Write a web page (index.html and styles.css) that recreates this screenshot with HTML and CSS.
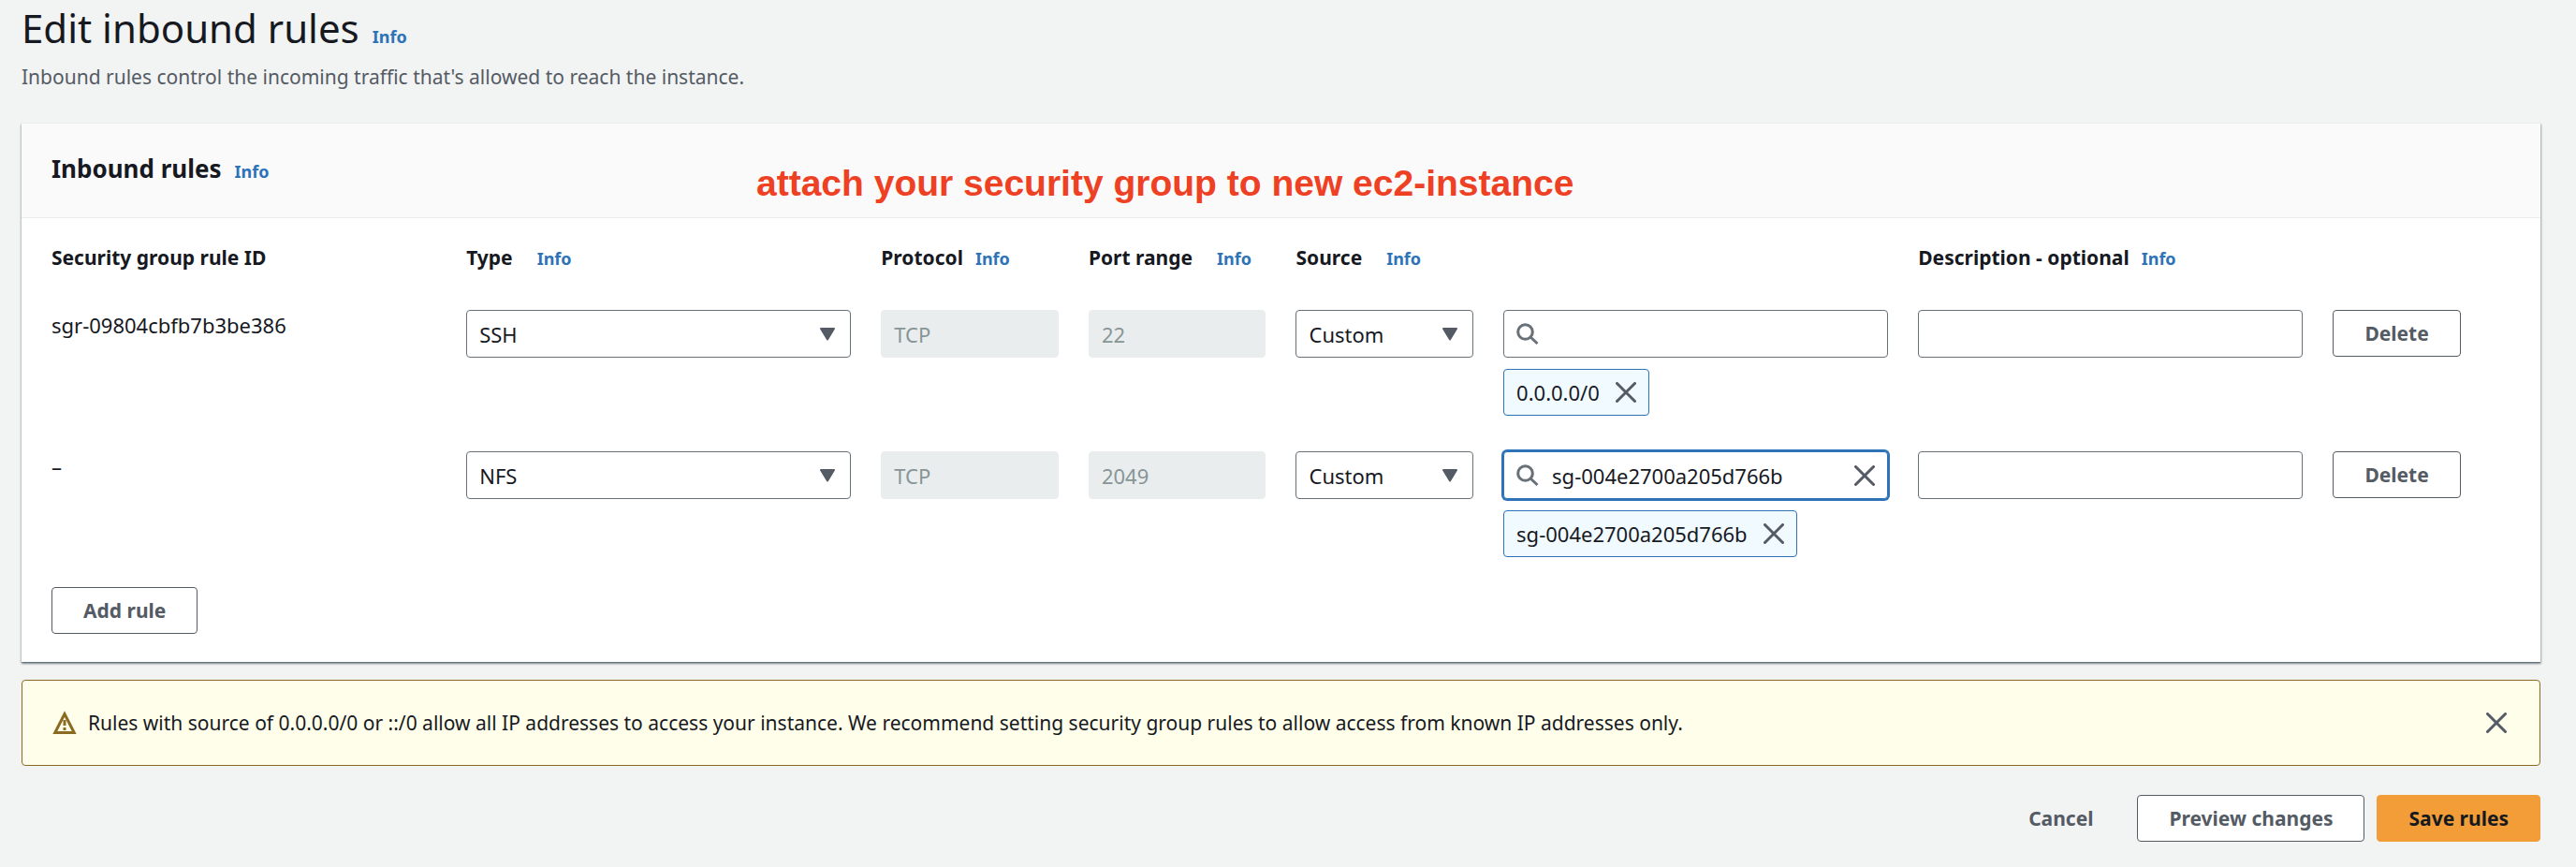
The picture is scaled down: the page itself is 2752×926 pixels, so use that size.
FILE: index.html
```html
<!DOCTYPE html>
<html lang="en">
<head>
<meta charset="utf-8">
<meta name="viewport" content="width=device-width, initial-scale=1">
<title>Edit inbound rules</title>
<link rel="stylesheet" href="styles.css">
</head>
<body>
<svg class="sprite" aria-hidden="true">
  <symbol id="icon-search" viewBox="0 0 24 24"><circle cx="9.5" cy="9.5" r="7.8"/><path d="M15 15l7.5 7"/></symbol>
  <symbol id="icon-close" viewBox="0 0 22 22"><path d="M1.5 1.5l19 19M20.500 1.500l-19 19"/></symbol>
  <symbol id="icon-caret" viewBox="0 0 16 14"><path d="M1 1h14l-7 11.500z"/></symbol>
  <symbol id="icon-warning" viewBox="0 0 26 26"><path d="M13 3.500L23.200 23.500H2.800z"/><path d="M13 10v6M13 18v3"/></symbol>
</svg>
<main class="page">
  <header class="page-header">
    <div class="title-line"><h1>Edit inbound rules</h1><a class="info" href="#info">Info</a></div>
    <p class="lead">Inbound rules control the incoming traffic that's allowed to reach the instance.</p>
  </header>

  <form class="form">
    <section class="card">
      <header class="card-header">
        <div class="title-line"><h2>Inbound rules</h2><a class="info" href="#info-rules">Info</a></div>
        <p class="note">attach your security group to new ec2-instance</p>
      </header>
      <div class="card-body">
        <div class="grid heads">
          <div class="wide head"><span id="h-id">Security group rule ID</span></div>
          <div class="wide head spaced"><span id="h-type">Type</span><a class="info" href="#info-type">Info</a></div>
          <div class="head"><span id="h-protocol">Protocol</span><a class="info" href="#info-protocol">Info</a></div>
          <div class="head spaced"><span id="h-port">Port range</span><a class="info" href="#info-port">Info</a></div>
          <div class="triple head spaced"><span id="h-source">Source</span><a class="info" href="#info-source">Info</a></div>
          <div class="triple head"><span id="h-desc">Description - optional</span><a class="info" href="#info-description">Info</a></div>
        </div>

        <div class="rules">
          <div class="grid">
            <div class="wide rule-id">sgr-09804cbfb7b3be386</div>
            <div class="wide select"><select class="control" aria-labelledby="h-type"><option>SSH</option></select><svg class="caret"><use href="#icon-caret"/></svg></div>
            <input class="control" type="text" value="TCP" disabled aria-labelledby="h-protocol">
            <input class="control" type="text" value="22" disabled aria-labelledby="h-port">
            <div class="select"><select class="control" aria-labelledby="h-source"><option>Custom</option></select><svg class="caret"><use href="#icon-caret"/></svg></div>
            <div class="wide source">
              <div class="control search"><svg class="glass"><use href="#icon-search"/></svg><input type="text" aria-label="Source filter"></div>
              <div class="token"><span>0.0.0.0/0</span><button class="close" type="button" aria-label="Remove 0.0.0.0/0"><svg><use href="#icon-close"/></svg></button></div>
            </div>
            <input class="wide control" type="text" aria-labelledby="h-desc">
            <div><button class="button" type="button">Delete</button></div>
          </div>
          <div class="grid">
            <div class="wide rule-id">–</div>
            <div class="wide select"><select class="control" aria-labelledby="h-type"><option>NFS</option></select><svg class="caret"><use href="#icon-caret"/></svg></div>
            <input class="control" type="text" value="TCP" disabled aria-labelledby="h-protocol">
            <input class="control" type="text" value="2049" disabled aria-labelledby="h-port">
            <div class="select"><select class="control" aria-labelledby="h-source"><option>Custom</option></select><svg class="caret"><use href="#icon-caret"/></svg></div>
            <div class="wide source">
              <div class="control search active"><svg class="glass"><use href="#icon-search"/></svg><input type="text" value="sg-004e2700a205d766b" aria-label="Source filter"><button class="close" type="button" aria-label="Clear"><svg><use href="#icon-close"/></svg></button></div>
              <div class="token"><span>sg-004e2700a205d766b</span><button class="close" type="button" aria-label="Remove sg-004e2700a205d766b"><svg><use href="#icon-close"/></svg></button></div>
            </div>
            <input class="wide control" type="text" aria-labelledby="h-desc">
            <div><button class="button" type="button">Delete</button></div>
          </div>
        </div>
        <button class="button" type="button">Add rule</button>
      </div>
    </section>

    <div class="alert" role="status">
      <svg class="warning" aria-hidden="true"><use href="#icon-warning"/></svg>
      <p>Rules with source of 0.0.0.0/0 or ::/0 allow all IP addresses to access your instance. We recommend setting security group rules to allow access from known IP addresses only.</p>
      <button class="close" type="button" aria-label="Dismiss"><svg><use href="#icon-close"/></svg></button>
    </div>

    <div class="actions">
      <button class="button link" type="button">Cancel</button>
      <button class="button" type="button">Preview changes</button>
      <button class="button primary" type="submit">Save rules</button>
    </div>
  </form>
</main>
</body>
</html>
```
FILE: styles.css
```css
*{box-sizing:border-box}
body{
  margin:0;
  background:#f2f3f3;
  color:#16191f;
  font-family:"Noto Sans",sans-serif;
  font-size:21px;
  line-height:32px;
}
h1,h2,p{margin:0}
svg{display:block;fill:none;stroke:currentColor}
.sprite{position:absolute;width:0;height:0}

.page{padding:0 38px 28px 23px}
.title-line{display:flex;align-items:baseline;gap:14px}
h1{font-size:42px;font-weight:400;line-height:60px}
h2{font-size:26px;font-weight:700;line-height:36px}
.info{color:#2e73b8;font-size:18px;font-weight:700;text-decoration:none}
.lead{margin-top:6px;color:#545b64}
.form{margin-top:33px}

.card{
  background:#fff;
  border-top:1px solid #eaeded;
  box-shadow:0 1px 1px 0 rgba(0,28,36,.3),1px 2px 2px 0 rgba(0,28,36,.3),-1px 2px 2px 0 rgba(0,28,36,.2);
}
.card-header{
  position:relative;
  padding:30px 32px 33px;
  background:#fafafa;
  border-bottom:1px solid #eaeded;
}
.note{
  position:absolute;
  left:785px;
  top:44px;
  color:#ee4023;
  font:700 39px/40px "Liberation Sans",Arial,sans-serif;
  white-space:nowrap;
}
.card-body{padding:26px 32px 30px}
.grid{display:grid;grid-template-columns:repeat(12,minmax(0,1fr));column-gap:32px;align-items:start}
.wide{grid-column:span 2}
.triple{grid-column:span 3}
.head{display:flex;align-items:baseline;gap:13px;font-weight:700;white-space:nowrap}
.spaced{gap:26px}
.rules{display:grid;gap:38px;margin:39px 0 32px}
.rule-id{font-size:22px}

.control{
  width:100%;
  height:51px;
  margin:0;
  padding:0 13px;
  background:#fff;
  border:1px solid #687078;
  border-radius:4px;
  color:#16191f;
  font:22px "Noto Sans",sans-serif;
}
.control:disabled{background:#eaeded;border-color:#eaeded;color:#879596}
.select{position:relative}
select.control{appearance:none}
.caret{
  position:absolute;
  right:17px;
  top:19px;
  width:16px;
  height:14px;
  fill:#545b64;
  stroke:#545b64;
  stroke-width:2px;
  stroke-linejoin:round;
  pointer-events:none;
}
.source{display:grid;grid-template-columns:minmax(0,1fr);gap:12px;justify-items:start}
.search{display:flex;align-items:center;gap:14px}
.search input{
  flex:1;
  min-width:0;
  padding:0;
  border:0;
  outline:0;
  background:none;
  color:inherit;
  font:inherit;
}
.active{border-color:#2e73b8;box-shadow:0 0 0 2px #2e73b8}
.glass{width:24px;height:24px;color:#687078;stroke-width:3px}
.token{
  display:flex;
  align-items:center;
  gap:17px;
  height:50px;
  padding:0 13px;
  background:#f1faff;
  border:1px solid #2e73b8;
  border-radius:4px;
  font-size:22px;
}
.close{padding:0;border:0;background:none;color:#545b64}
.close svg{width:22px;height:22px;stroke-width:3px;stroke-linecap:round}

.button{
  height:50px;
  padding:0 33px;
  background:#fff;
  border:1px solid #545b64;
  border-radius:4px;
  color:#545b64;
  font:700 21px "Noto Sans",sans-serif;
  white-space:nowrap;
}
.link{background:none;border-color:transparent}
.primary{background:#f29d38;border-color:#f29d38;color:#16191f}

.alert{
  display:flex;
  align-items:center;
  gap:12px;
  margin-top:19px;
  padding:29px 35px 29px 32px;
  background:#fffeea;
  border:1px solid #8b6b22;
  border-radius:4px;
}
.alert p{flex:1}
.warning{width:26px;height:26px;color:#8b6b22;stroke-width:3px}
.actions{display:flex;justify-content:flex-end;gap:13px;margin-top:31px}
```
